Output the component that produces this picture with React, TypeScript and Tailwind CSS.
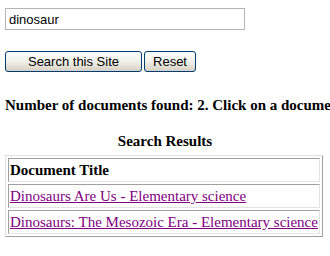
export default function App() {
  return (
    <div className="w-[330px] h-[256px] overflow-hidden bg-white pl-[5px] pt-[8px] font-['Liberation_Serif',serif] text-black">
      <input
        type="text"
        defaultValue="dinosaur"
        className="block w-[240px] h-[22px] border border-[#b5b5b5] px-[3px] font-['Liberation_Sans',Arial,sans-serif] text-[13px] outline-none"
      />
      <div className="mt-[21px] flex gap-[2px]">
        <button className="w-[137px] h-[21px] rounded-[3px] border border-[#003c74] bg-gradient-to-b from-white via-[#f0f0ea] to-[#d6d0c5] font-['Liberation_Sans',Arial,sans-serif] text-[13px] leading-none">
          Search this Site
        </button>
        <button className="w-[52px] h-[21px] rounded-[3px] border border-[#003c74] bg-gradient-to-b from-white via-[#f0f0ea] to-[#d6d0c5] font-['Liberation_Sans',Arial,sans-serif] text-[13px] leading-none">
          Reset
        </button>
      </div>
      <p className="mt-[24px] whitespace-nowrap font-bold text-[15px] leading-[18px]">
        Number of documents found: 2. Click on a document to view it.
      </p>
      <p className="mt-[18px] -ml-[5px] text-center font-bold text-[15px] leading-[18px]">
        Search Results
      </p>
      <table className="mt-[5px] whitespace-nowrap border-separate border-spacing-[2px] border border-t-[#e3e3e3] border-l-[#e3e3e3] border-r-[#a0a0a0] border-b-[#a0a0a0] text-[15px] leading-[20px]">
        <tbody>
          <tr>
            <th className="text-left font-bold p-[1px] border border-t-[#a0a0a0] border-l-[#a0a0a0] border-r-[#e3e3e3] border-b-[#e3e3e3]">
              Document Title
            </th>
          </tr>
          <tr>
            <td className="p-[1px] border border-t-[#a0a0a0] border-l-[#a0a0a0] border-r-[#e3e3e3] border-b-[#e3e3e3]">
              <a href="#" className="text-[#800080] underline">
                Dinosaurs Are Us - Elementary science
              </a>
            </td>
          </tr>
          <tr>
            <td className="p-[1px] border border-t-[#a0a0a0] border-l-[#a0a0a0] border-r-[#e3e3e3] border-b-[#e3e3e3]">
              <a href="#" className="text-[#800080] underline">
                Dinosaurs: The Mesozoic Era - Elementary science
              </a>
            </td>
          </tr>
        </tbody>
      </table>
    </div>
  );
}
